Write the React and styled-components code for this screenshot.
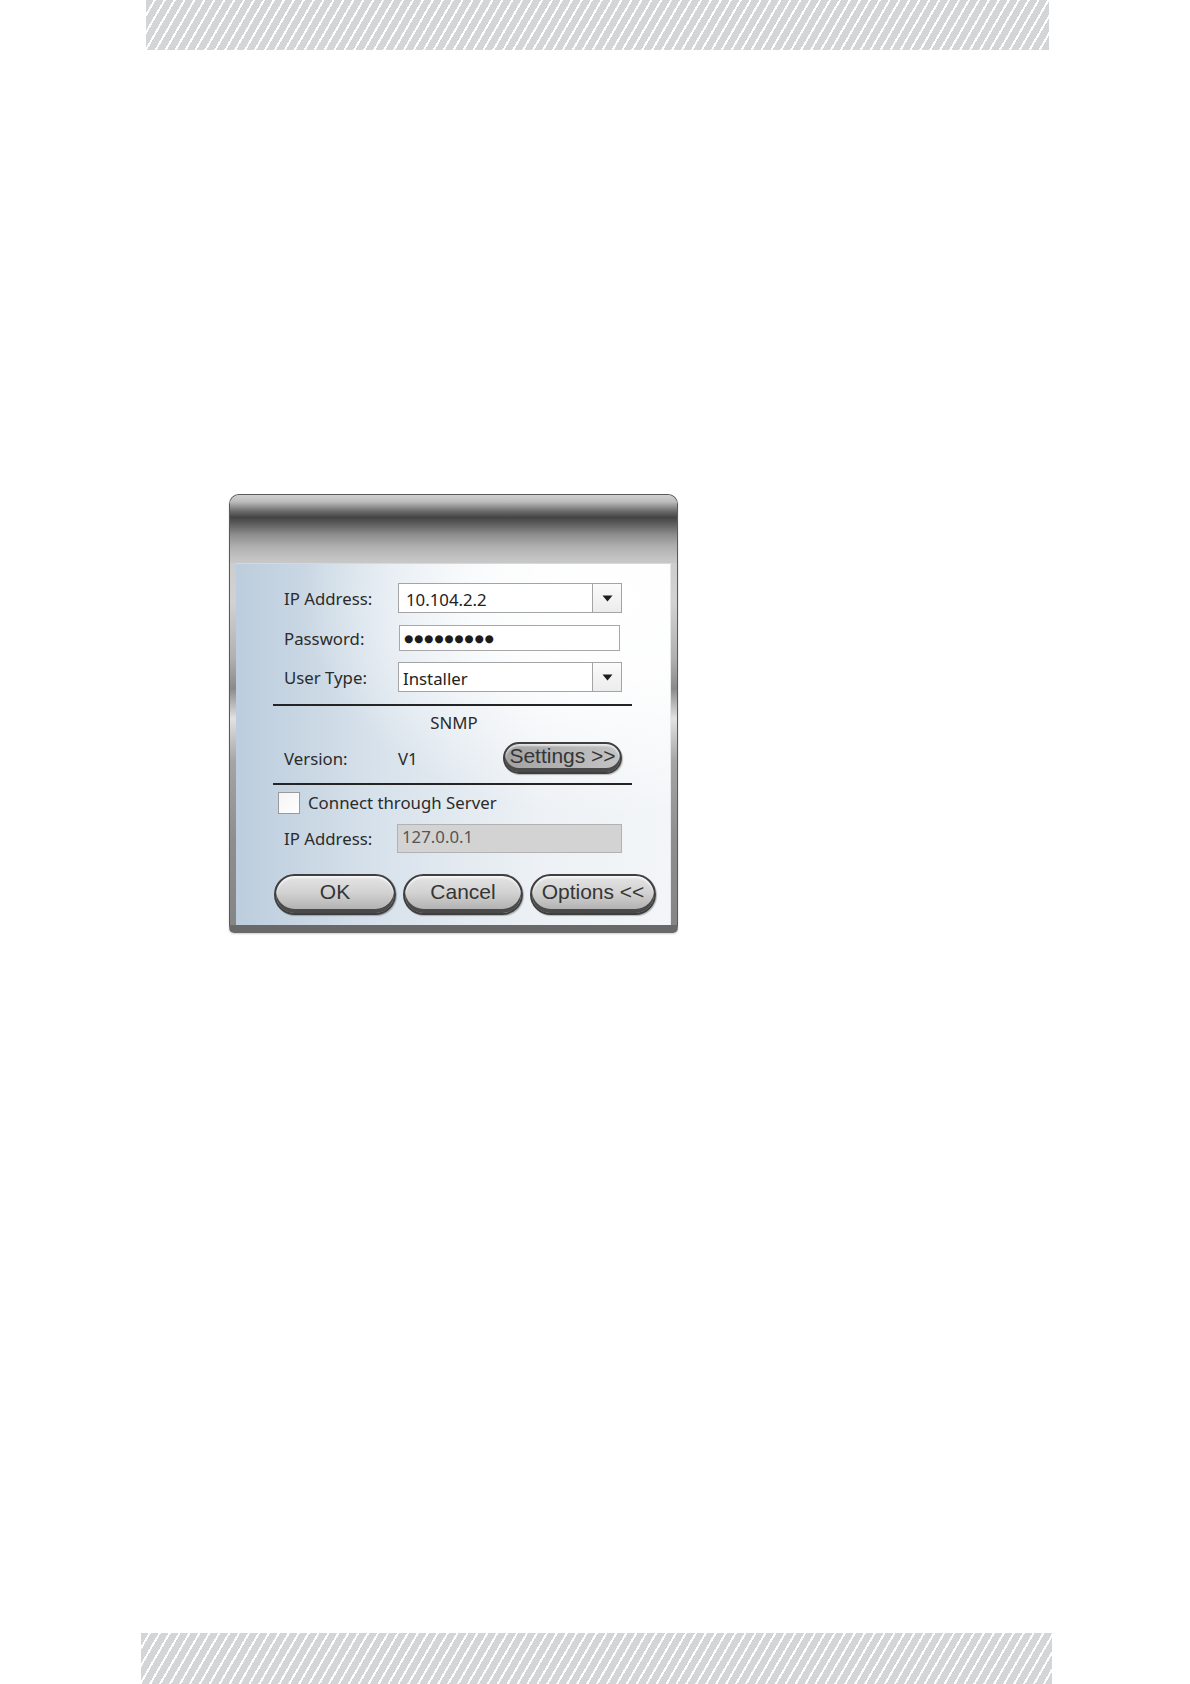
import React from "react"
import styled, { createGlobalStyle } from "styled-components"

const GlobalStyle = createGlobalStyle`
  html, body {
    margin:0;
    padding:0;
    background:#fff;
  }
  body {
    font-family: "Noto Sans", "Open Sans", sans-serif;
  }
`

function ArrowDown() {
  return (
    <svg width="11" height="7" viewBox="0 0 11 7">
      <path d="M0.5 0.5 L10.5 0.5 L5.5 6.5 Z" fill="#1e1e1e" />
    </svg>
  )
}

function LoginDialog() {
  return (
    <Window>
      <TitleBar />
      <Panel>
        <FieldRow $mt={0}>
          <Label>IP Address:</Label>
          <Combo>
            <ComboText>10.104.2.2</ComboText>
            <ComboButton><ArrowDown /></ComboButton>
          </Combo>
        </FieldRow>
        <FieldRow $mt={12}>
          <Label>Password:</Label>
          <TextBox>
            <Dots>●●●●●●●●●</Dots>
          </TextBox>
        </FieldRow>
        <FieldRow $mt={11}>
          <Label>User Type:</Label>
          <Combo>
            <ComboText $small>Installer</ComboText>
            <ComboButton><ArrowDown /></ComboButton>
          </Combo>
        </FieldRow>

        <Divider $mt={12} />
        <SectionTitle>SNMP</SectionTitle>
        <VersionRow>
          <Label>Version:</Label>
          <Label>V1</Label>
          <PillButton $w={119} $h={32} $dark>Settings &gt;&gt;</PillButton>
        </VersionRow>
        <Divider $mt={9} />

        <CheckRow>
          <CheckBox />
          <Label>Connect through Server</Label>
        </CheckRow>
        <FieldRow $mt={10}>
          <Label>IP Address:</Label>
          <DisabledBox>127.0.0.1</DisabledBox>
        </FieldRow>

        <ButtonRow>
          <PillButton $w={122} $h={41}>OK</PillButton>
          <PillButton $w={120} $h={41}>Cancel</PillButton>
          <PillButton $w={126} $h={41}>Options &lt;&lt;</PillButton>
        </ButtonRow>
      </Panel>
    </Window>
  )
}

export default function App() {
  return (
    <>
      <GlobalStyle />
      <Page>
        <Band $left={146} $w={903} $h={50} />
        <Content>
          <LoginDialog />
        </Content>
        <Band $left={141} $w={911} $h={51} />
      </Page>
    </>
  )
}

const Page = styled.div`
  width:1190px;
  height:1684px;
  display:flex;
  flex-direction:column;
  overflow:hidden;
`

const Band = styled.div`
  flex-shrink:0;
  height:${p => p.$h}px;
  width:${p => p.$w}px;
  margin-left:${p => p.$left}px;
  background: repeating-linear-gradient(120deg, #d4d5d6 0px, #d4d5d6 6.6px, #ffffff 6.6px, #ffffff 8.6px);
`

const Content = styled.main`
  flex:1;
  padding:444px 0 0 229px;
`

const Window = styled.div`
  width:449px;
  height:439px;
  box-sizing:border-box;
  display:flex;
  flex-direction:column;
  padding:0 6px;
  border:1px solid #5a5a5a;
  border-bottom:8px solid #696969;
  border-radius:10px 10px 5px 5px;
  background: linear-gradient(to bottom,
    #c4c4c4 0%, #d2d2d2 25%, #b0b0b0 38%, #8a8a8a 45%,
    #e2e2e2 52%, #a4a4a4 62%, #8e8e8e 80%, #858585 100%);
  box-shadow: 0 1px 2px rgba(0,0,0,0.2);
`

const TitleBar = styled.div`
  flex-shrink:0;
  height:68px;
  margin:0 -6px;
  border-radius:9px 9px 0 0;
  background: linear-gradient(to bottom,
    #d0d0d0 0%, #bcbcbc 10%, #6a6a6a 24%, #444444 33%,
    #5c5c5c 42%, #8c8c8c 58%, #aeaeae 75%, #c2c2c2 92%, #c8c8c8 100%);
`

const Panel = styled.div`
  flex:1;
  box-sizing:border-box;
  display:flex;
  flex-direction:column;
  padding:19px 46px 0 48px;
  border-top:1px solid #d8d8d8;
  border-right:1px solid #e6e6e6;
  background:
    radial-gradient(ellipse 70% 60% at 85% 10%, #ffffff 0%, rgba(255,255,255,0.85) 40%, rgba(255,255,255,0) 100%),
    linear-gradient(to right, #bccddd 0%, #d9e3ec 35%, #edf1f5 70%, #f3f6f8 100%);
`

const FieldRow = styled.div`
  display:grid;
  grid-template-columns:114px 224px;
  align-items:center;
  margin-top:${p => p.$mt}px;
`

const Label = styled.span`
  font-size:16.8px;
  color:#2b2b2b;
  white-space:nowrap;
`

const Combo = styled.div`
  height:30px;
  box-sizing:border-box;
  display:flex;
  border:1px solid #a4a4a4;
  background:#fff;
`

const ComboText = styled.div`
  flex:1;
  font-size:16.8px;
  color:#222;
  padding:${p => (p.$small ? "6px 0 0 4px" : "6px 0 0 7px")};
  line-height:20px;
`

const ComboButton = styled.div`
  width:28px;
  display:flex;
  align-items:center;
  justify-content:center;
  border-left:1px solid #a4a4a4;
  background:linear-gradient(to bottom, #fbfbfb, #ececec);
`

const TextBox = styled.div`
  width:221px;
  height:26px;
  margin-left:1px;
  box-sizing:border-box;
  display:flex;
  align-items:center;
  border:1px solid #a8a8a8;
  background:#fff;
  padding-left:4px;
`

const Dots = styled.span`
  font-family:"DejaVu Sans", sans-serif;
  font-size:10.5px;
  letter-spacing:0.9px;
  color:#1c1c1c;
`

const Divider = styled.div`
  height:2px;
  background:#242424;
  margin:${p => p.$mt}px -8px 0 -11px;
`

const SectionTitle = styled.div`
  text-align:center;
  font-size:16.8px;
  color:#2b2b2b;
  margin-top:6px;
  line-height:22px;
`

const VersionRow = styled.div`
  display:grid;
  grid-template-columns:114px 105px 119px;
  align-items:center;
  margin-top:8px;
`

const PillButton = styled.button`
  flex-shrink:0;
  width:${p => p.$w}px;
  height:${p => p.$h}px;
  box-sizing:border-box;
  padding:0 0 ${p => (p.$dark ? 4 : 5)}px;
  border:2px solid #3f3f3f;
  border-radius:${p => p.$h / 2}px;
  font-family:"Liberation Sans", Arial, sans-serif;
  font-size:21px;
  color:#353535;
  white-space:nowrap;
  background:${p => (p.$dark
    ? "linear-gradient(to right, #a2a2a2 0%, #b4b4b4 50%, #c4c4c4 100%)"
    : "linear-gradient(to bottom, #e4e4e4 0%, #d2d2d2 45%, #b6b6b6 85%, #a8a8a8 100%)")};
  box-shadow: inset 0 -4px 0 #4a4a4a, inset 0 2px 2px rgba(255,255,255,0.7), 1px 1px 1px rgba(0,0,0,0.25);
  cursor:pointer;
`

const CheckRow = styled.div`
  display:flex;
  align-items:center;
  gap:8px;
  margin:6px 0 0 -6px;
`

const CheckBox = styled.span`
  width:22px;
  height:22px;
  box-sizing:border-box;
  border:1px solid #9a9a9a;
  background:linear-gradient(to bottom right, #f4f4f4, #ffffff);
`

const DisabledBox = styled.div`
  width:225px;
  height:29px;
  margin-left:-1px;
  box-sizing:border-box;
  border:1px solid #b2b2b2;
  background:#d3d3d3;
  color:#555;
  font-size:16.8px;
  line-height:20px;
  padding:2px 0 0 4px;
`

const ButtonRow = styled.div`
  display:flex;
  gap:7px;
  margin:21px -36px 0 -10px;
`
